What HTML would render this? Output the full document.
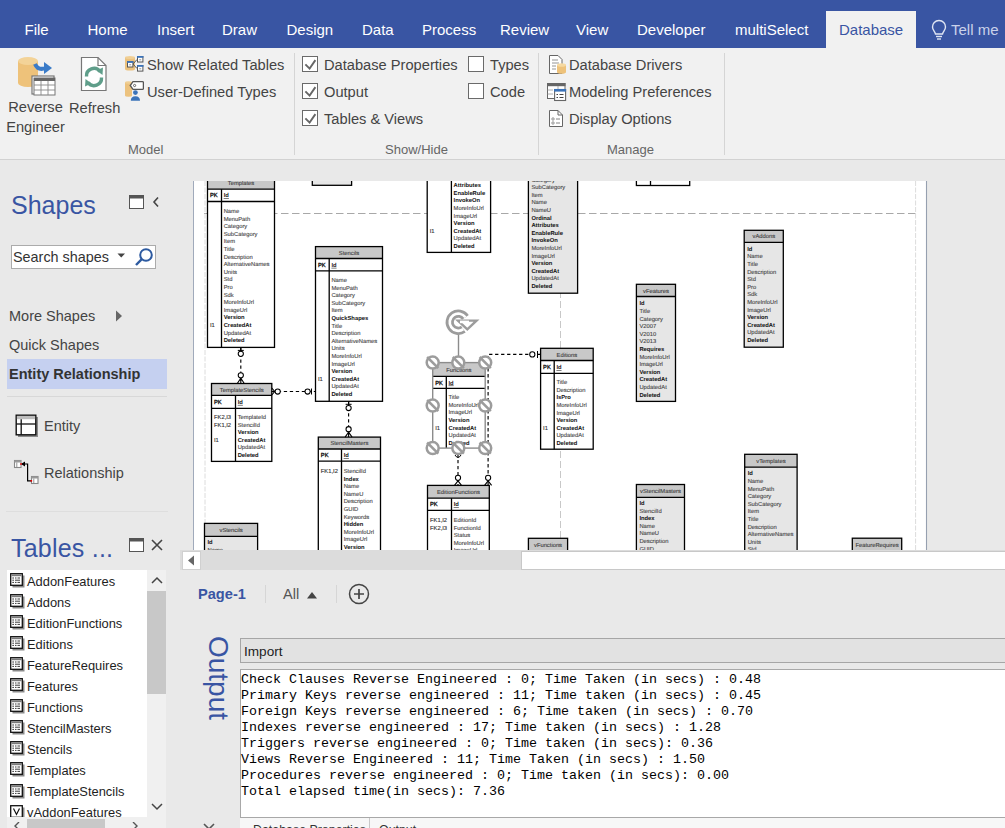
<!DOCTYPE html><html><head><meta charset="utf-8"><style>
*{margin:0;padding:0;box-sizing:border-box}
html,body{width:1005px;height:828px;overflow:hidden;background:#e9e9e9;font-family:"Liberation Sans",sans-serif;position:relative}
.a{position:absolute;white-space:nowrap}
.tab{position:absolute;top:21px;font-size:15px;color:#fff;line-height:18px}
.rb{font-size:14.67px;color:#444;line-height:16px}
.grp{font-size:13px;color:#666;line-height:14px}
.cb{position:absolute;width:16px;height:16px;border:1px solid #6a6a6a;background:#fff}
.li{position:absolute;left:27px;font-size:12.9px;color:#1e1e1e;line-height:14px}
.lico{position:absolute;left:10px;width:15px;height:15px}
.mono{position:absolute;left:241px;font-family:"Liberation Mono",monospace;font-size:13.33px;color:#000;line-height:16px}
</style></head><body>
<div class="a" style="left:0;top:0;width:1005px;height:48px;background:#3955a3"></div>
<div class="a" style="left:826px;top:11px;width:90px;height:37px;background:#f1f1f1"></div>
<div class="tab" style="left:24.5px">File</div>
<div class="tab" style="left:87.5px">Home</div>
<div class="tab" style="left:157px">Insert</div>
<div class="tab" style="left:222px">Draw</div>
<div class="tab" style="left:286.5px">Design</div>
<div class="tab" style="left:362px">Data</div>
<div class="tab" style="left:422px">Process</div>
<div class="tab" style="left:500px">Review</div>
<div class="tab" style="left:576px">View</div>
<div class="tab" style="left:637px">Developer</div>
<div class="tab" style="left:735px">multiSelect</div>
<div class="tab" style="left:839px;color:#3955a3">Database</div>
<div class="tab" style="left:951px;color:#c9d2ea">Tell me</div>
<svg class="a" style="left:930px;top:19px" width="18" height="22" viewBox="0 0 18 22"><path d="M9,1.5 C5,1.5 2.5,4.5 2.5,8 C2.5,11 5,12.5 5.5,15 L12.5,15 C13,12.5 15.5,11 15.5,8 C15.5,4.5 13,1.5 9,1.5 Z" fill="none" stroke="#dfe5f3" stroke-width="1.4"/><line x1="6" y1="17.5" x2="12" y2="17.5" stroke="#dfe5f3" stroke-width="1.4"/><line x1="7" y1="20" x2="11" y2="20" stroke="#dfe5f3" stroke-width="1.4"/></svg>
<div class="a" style="left:0;top:48px;width:1005px;height:111px;background:#f1f1f1"></div>
<div class="a" style="left:0;top:159px;width:1005px;height:1px;background:#d2d2d2"></div>
<div class="a" style="left:294px;top:53px;width:1px;height:102px;background:#d5d5d5"></div>
<div class="a" style="left:538px;top:53px;width:1px;height:102px;background:#d5d5d5"></div>
<div class="a" style="left:724px;top:53px;width:1px;height:102px;background:#d5d5d5"></div>
<svg class="a" style="left:14px;top:55px" width="44" height="42" viewBox="0 0 44 42"><path d="M4,6 L4,28 A10,4 0 0 0 24,28 L24,6 Z" fill="#eec27a"/><ellipse cx="14" cy="6" rx="10" ry="4" fill="#f3d398"/><path d="M21,9 Q24,16 32,13" fill="none" stroke="#3a7bc8" stroke-width="4"/><path d="M30,7 L38,13 L30,19 Z" fill="#3a7bc8"/><rect x="18" y="21" width="22" height="18" fill="#fff" stroke="#777" stroke-width="1.2"/><rect x="20" y="23" width="21" height="17" fill="#fff" stroke="#777" stroke-width="1"/><rect x="20" y="23" width="21" height="3" fill="#666"/><path d="M20,30 H41 M20,35 H41 M27,26 V40 M34,26 V40" stroke="#888" stroke-width="0.9"/></svg>
<div class="a rb" style="left:0px;top:97px;width:71px;text-align:center;line-height:20px">Reverse<br>Engineer</div>
<svg class="a" style="left:80px;top:56px" width="28" height="36" viewBox="0 0 28 36"><path d="M1.5,1.5 H18 L26,9.5 V34.5 H1.5 Z" fill="#fff" stroke="#777" stroke-width="1.2"/><path d="M18,1.5 V9.5 H26" fill="none" stroke="#777" stroke-width="1.2"/><path d="M6.5,20.5 A7.5,7.5 0 0 1 20,15.5" fill="none" stroke="#5f9e8a" stroke-width="3.4"/><path d="M16.5,14.5 L23,11.5 L22.5,19 Z" fill="#5f9e8a"/><path d="M21.5,21.5 A7.5,7.5 0 0 1 8,26.5" fill="none" stroke="#5f9e8a" stroke-width="3.4"/><path d="M11.5,27.5 L5,30.5 L5.5,23 Z" fill="#5f9e8a"/></svg>
<div class="a rb" style="left:69px;top:98px;line-height:20px">Refresh</div>
<svg class="a" style="left:124px;top:55px" width="20" height="18" viewBox="0 0 20 18"><path d="M1,2.5 V14 A5,1.5 0 0 0 11,14 V2.5 Z" fill="#ecc27e"/><ellipse cx="6" cy="2.5" rx="5" ry="1.5" fill="#f0cf95"/><path d="M9,9 L13,4.5 M9,9 L13,13.5" stroke="#555" stroke-width="1"/><rect x="3.5" y="6.6" width="5.4" height="5.4" fill="#fff" stroke="#555" stroke-width="1"/><rect x="3" y="6.1" width="6.4" height="1.8" fill="#3a72b8"/><path d="M5.2,9.8 H7.2" stroke="#777" stroke-width="0.8"/><rect x="13.5" y="1.5" width="5.4" height="5.5" fill="#fff" stroke="#555" stroke-width="1"/><rect x="13" y="1" width="6.4" height="1.8" fill="#3a72b8"/><path d="M15.2,4.8 H17.2" stroke="#777" stroke-width="0.8"/><rect x="13.5" y="10.5" width="5.4" height="5.6" fill="#fff" stroke="#555" stroke-width="1"/><rect x="13" y="10" width="6.4" height="1.8" fill="#3a72b8"/><path d="M15.2,13.8 H17.2" stroke="#777" stroke-width="0.8"/></svg>
<svg class="a" style="left:124px;top:80px" width="20" height="22" viewBox="0 0 20 22"><path d="M1,2.5 V15.5 A3.5,1.2 0 0 0 8,15.5 V2.5 Z" fill="#ecc27e"/><ellipse cx="4.5" cy="2.5" rx="3.5" ry="1.2" fill="#f0cf95"/><path d="M9,1.6 H18.4 Q19.4,1.6 19.4,2.6 V8.4 Q19.4,9.4 18.4,9.4 H9 L6.2,5.5 Z" fill="#fff" stroke="#555" stroke-width="1.3"/><circle cx="10.6" cy="5.5" r="1.1" fill="none" stroke="#555" stroke-width="0.9"/><circle cx="11.4" cy="12.6" r="2.4" fill="#3b73b9"/><path d="M6.8,20.8 Q6.8,16.2 11.4,16.2 Q16,16.2 16,20.8 Z" fill="#3b73b9"/></svg>
<div class="a rb" style="left:147px;top:57px">Show Related Tables</div>
<div class="a rb" style="left:147px;top:84px">User-Defined Types</div>
<div class="a grp" style="left:128px;top:143px">Model</div>
<div class="cb" style="left:302px;top:56px"><svg width="16" height="16" viewBox="0 0 16 16" style="position:absolute;left:-1px;top:-1px"><path d="M3.4,8.3 L7.6,12.6 L13.4,4.1" fill="none" stroke="#666" stroke-width="1.9"/></svg></div>
<div class="a rb" style="left:324px;top:57px">Database Properties</div>
<div class="cb" style="left:302px;top:83px"><svg width="16" height="16" viewBox="0 0 16 16" style="position:absolute;left:-1px;top:-1px"><path d="M3.4,8.3 L7.6,12.6 L13.4,4.1" fill="none" stroke="#666" stroke-width="1.9"/></svg></div>
<div class="a rb" style="left:324px;top:84px">Output</div>
<div class="cb" style="left:302px;top:110px"><svg width="16" height="16" viewBox="0 0 16 16" style="position:absolute;left:-1px;top:-1px"><path d="M3.4,8.3 L7.6,12.6 L13.4,4.1" fill="none" stroke="#666" stroke-width="1.9"/></svg></div>
<div class="a rb" style="left:324px;top:111px">Tables &amp; Views</div>
<div class="cb" style="left:468px;top:56px"></div>
<div class="a rb" style="left:490px;top:57px">Types</div>
<div class="cb" style="left:468px;top:83px"></div>
<div class="a rb" style="left:490px;top:84px">Code</div>
<div class="a grp" style="left:385px;top:143px">Show/Hide</div>
<svg class="a" style="left:548px;top:54px" width="20" height="21" viewBox="0 0 20 21"><path d="M1.5,1.5 H10 L14,5.5 V19.5 H1.5 Z" fill="#fff" stroke="#666" stroke-width="1"/><path d="M4,6 H10 M4,9 H11 M4,12 H8 M4,15 H8" stroke="#888" stroke-width="0.9"/><path d="M9,11 V18 A4.5,1.8 0 0 0 18,18 V11 Z" fill="#eec27a"/><ellipse cx="13.5" cy="11" rx="4.5" ry="1.8" fill="#f6d9a0"/></svg>
<svg class="a" style="left:546px;top:82px" width="21" height="20" viewBox="0 0 21 20"><rect x="1.5" y="1.5" width="17.5" height="15" fill="#fff" stroke="#666" stroke-width="1"/><rect x="1" y="1" width="18.5" height="3.2" fill="#666"/><path d="M1.5,8 H7 M1.5,12 H7 M12,4 V8" stroke="#999" stroke-width="0.8"/><rect x="8.6" y="7.5" width="11" height="11" fill="#fff" stroke="#666" stroke-width="1.1"/><rect x="8.1" y="7" width="12" height="2.6" fill="#3a72b8"/><path d="M10.5,12.5 H12 M13.5,12.5 H17.5 M10.5,15.5 H12 M13.5,15.5 H17.5" stroke="#444" stroke-width="1.1"/></svg>
<svg class="a" style="left:548px;top:109px" width="16" height="19" viewBox="0 0 16 19"><path d="M1.5,1.5 H10 L14.5,6 V17.5 H1.5 Z" fill="#fff" stroke="#666" stroke-width="1"/><path d="M10,1.5 V6 H14.5" fill="none" stroke="#666" stroke-width="1"/><circle cx="5" cy="10" r="1.2" fill="none" stroke="#777" stroke-width="0.8"/><circle cx="5" cy="14" r="1.2" fill="none" stroke="#777" stroke-width="0.8"/><path d="M8,10 H12 M8,14 H12" stroke="#777" stroke-width="0.9"/></svg>
<div class="a rb" style="left:569px;top:57px">Database Drivers</div>
<div class="a rb" style="left:569px;top:84px">Modeling Preferences</div>
<div class="a rb" style="left:569px;top:111px">Display Options</div>
<div class="a grp" style="left:607px;top:143px">Manage</div>
<svg text-rendering="geometricPrecision" width="825" height="390" viewBox="180 160 825 390" style="position:absolute;left:180px;top:160px;font-family:'Liberation Sans',sans-serif">
<rect x="180" y="160" width="825" height="390" fill="#e9e9e9"/>
<rect x="194" y="181" width="733" height="369" fill="#ffffff"/>
<defs><clipPath id="pg"><rect x="194" y="181" width="733" height="369"/></clipPath></defs><g clip-path="url(#pg)">
<line x1="204" y1="213.5" x2="916" y2="213.5" stroke="#a8a8a8" stroke-width="1" stroke-dasharray="7.5 3.5"/>
<line x1="205" y1="181" x2="205" y2="550" stroke="#dcdcdc" stroke-width="1" stroke-dasharray="5 1.5"/>
<line x1="915.6" y1="181" x2="915.6" y2="550" stroke="#dcdcdc" stroke-width="1" stroke-dasharray="5 1.5"/>
<line x1="560.5" y1="181" x2="560.5" y2="550" stroke="#c8c8c8" stroke-width="1" stroke-dasharray="7 3"/>
<rect x="312.3" y="150" width="39.30000000000001" height="35.30000000000001" fill="#e6e6e6"/>
<rect x="312.3" y="150" width="39.30000000000001" height="10" fill="#c8c8c8"/>
<text x="332.0" y="157.1" font-size="5.8" font-weight="normal" fill="#404040" stroke="#404040" stroke-width="0.12" text-anchor="middle">x</text>
<g stroke="#000" stroke-width="1.3" fill="none">
<rect x="312.3" y="150" width="39.30000000000001" height="35.30000000000001"/>
<line x1="312.3" y1="160" x2="351.6" y2="160"/>
</g>
<rect x="636.4" y="150" width="53.30000000000007" height="35.5" fill="#fff" stroke="none"/>
<rect x="636.4" y="150" width="53.30000000000007" height="10" fill="#c8c8c8"/>
<text x="663.0" y="157.1" font-size="5.8" font-weight="normal" fill="#404040" stroke="#404040" stroke-width="0.12" text-anchor="middle">y</text>
<text x="638.9" y="167.1" font-size="5.8" font-weight="normal" fill="#111" stroke="#111" stroke-width="0.3">PK</text>
<text x="652.7" y="167.1" font-size="5.8" font-weight="bold" fill="#202020" text-decoration="underline">Id</text>
<g stroke="#000" stroke-width="1.3" fill="none">
<rect x="636.4" y="150" width="53.30000000000007" height="35.5"/>
<line x1="636.4" y1="160" x2="689.7" y2="160"/>
<line x1="636.4" y1="170" x2="689.7" y2="170"/>
<line x1="650.5" y1="160" x2="650.5" y2="185.5"/>
</g>
<rect x="427.2" y="100" width="63.400000000000034" height="152.4" fill="#fff" stroke="none"/>
<rect x="427.2" y="100" width="63.400000000000034" height="10" fill="#c8c8c8"/>
<text x="458.9" y="107.1" font-size="5.8" font-weight="normal" fill="#404040" stroke="#404040" stroke-width="0.12" text-anchor="middle">Functions0</text>
<text x="429.7" y="118.1" font-size="5.8" font-weight="normal" fill="#111" stroke="#111" stroke-width="0.3">PK</text>
<text x="453.6" y="118.1" font-size="5.8" font-weight="bold" fill="#202020" text-decoration="underline">Id</text>
<text x="453.6" y="179.6" font-size="5.8" font-weight="bold" fill="#111" text-anchor="start">Ordinal</text>
<text x="453.6" y="187.2" font-size="5.8" font-weight="bold" fill="#111" text-anchor="start">Attributes</text>
<text x="453.6" y="194.8" font-size="5.8" font-weight="bold" fill="#111" text-anchor="start">EnableRule</text>
<text x="453.6" y="202.4" font-size="5.8" font-weight="bold" fill="#111" text-anchor="start">InvokeOn</text>
<text x="453.6" y="210.0" font-size="5.8" font-weight="normal" fill="#484848" stroke="#484848" stroke-width="0.12" text-anchor="start">MoreInfoUrl</text>
<text x="453.6" y="217.6" font-size="5.8" font-weight="normal" fill="#484848" stroke="#484848" stroke-width="0.12" text-anchor="start">ImageUrl</text>
<text x="453.6" y="225.2" font-size="5.8" font-weight="bold" fill="#111" text-anchor="start">Version</text>
<text x="453.6" y="232.8" font-size="5.8" font-weight="bold" fill="#111" text-anchor="start">CreatedAt</text>
<text x="429.7" y="232.8" font-size="5.8" font-weight="normal" fill="#303030" stroke="#303030" stroke-width="0.12" text-anchor="start">I1</text>
<text x="453.6" y="240.4" font-size="5.8" font-weight="normal" fill="#484848" stroke="#484848" stroke-width="0.12" text-anchor="start">UpdatedAt</text>
<text x="453.6" y="248.0" font-size="5.8" font-weight="bold" fill="#111" text-anchor="start">Deleted</text>
<g stroke="#000" stroke-width="1.3" fill="none">
<rect x="427.2" y="100" width="63.400000000000034" height="152.4"/>
<line x1="427.2" y1="110" x2="490.6" y2="110"/>
<line x1="427.2" y1="122" x2="490.6" y2="122"/>
<line x1="451.4" y1="110" x2="451.4" y2="252.4"/>
</g>
<rect x="528.4" y="100" width="49.200000000000045" height="193.2" fill="#e6e6e6"/>
<rect x="528.4" y="100" width="49.200000000000045" height="10" fill="#c8c8c8"/>
<text x="553.0" y="107.1" font-size="5.8" font-weight="normal" fill="#404040" stroke="#404040" stroke-width="0.12" text-anchor="middle">vx</text>
<text x="531.4" y="181.6" font-size="5.8" font-weight="normal" fill="#484848" stroke="#484848" stroke-width="0.12" text-anchor="start">Category</text>
<text x="531.4" y="189.2" font-size="5.8" font-weight="normal" fill="#484848" stroke="#484848" stroke-width="0.12" text-anchor="start">SubCategory</text>
<text x="531.4" y="196.8" font-size="5.8" font-weight="normal" fill="#484848" stroke="#484848" stroke-width="0.12" text-anchor="start">Item</text>
<text x="531.4" y="204.4" font-size="5.8" font-weight="normal" fill="#484848" stroke="#484848" stroke-width="0.12" text-anchor="start">Name</text>
<text x="531.4" y="212.0" font-size="5.8" font-weight="normal" fill="#484848" stroke="#484848" stroke-width="0.12" text-anchor="start">NameU</text>
<text x="531.4" y="219.6" font-size="5.8" font-weight="bold" fill="#111" text-anchor="start">Ordinal</text>
<text x="531.4" y="227.2" font-size="5.8" font-weight="bold" fill="#111" text-anchor="start">Attributes</text>
<text x="531.4" y="234.8" font-size="5.8" font-weight="bold" fill="#111" text-anchor="start">EnableRule</text>
<text x="531.4" y="242.4" font-size="5.8" font-weight="bold" fill="#111" text-anchor="start">InvokeOn</text>
<text x="531.4" y="250.0" font-size="5.8" font-weight="normal" fill="#484848" stroke="#484848" stroke-width="0.12" text-anchor="start">MoreInfoUrl</text>
<text x="531.4" y="257.6" font-size="5.8" font-weight="normal" fill="#484848" stroke="#484848" stroke-width="0.12" text-anchor="start">ImageUrl</text>
<text x="531.4" y="265.2" font-size="5.8" font-weight="bold" fill="#111" text-anchor="start">Version</text>
<text x="531.4" y="272.8" font-size="5.8" font-weight="bold" fill="#111" text-anchor="start">CreatedAt</text>
<text x="531.4" y="280.4" font-size="5.8" font-weight="normal" fill="#484848" stroke="#484848" stroke-width="0.12" text-anchor="start">UpdatedAt</text>
<text x="531.4" y="288.0" font-size="5.8" font-weight="bold" fill="#111" text-anchor="start">Deleted</text>
<g stroke="#000" stroke-width="1.3" fill="none">
<rect x="528.4" y="100" width="49.200000000000045" height="193.2"/>
<line x1="528.4" y1="110" x2="577.6" y2="110"/>
</g>
<rect x="207.5" y="177" width="67.0" height="170.39999999999998" fill="#fff" stroke="none"/>
<rect x="207.5" y="177" width="67.0" height="12.199999999999989" fill="#c8c8c8"/>
<text x="241.0" y="185.2" font-size="5.8" font-weight="normal" fill="#404040" stroke="#404040" stroke-width="0.12" text-anchor="middle">Templates</text>
<text x="210.0" y="197.4" font-size="5.8" font-weight="normal" fill="#111" stroke="#111" stroke-width="0.3">PK</text>
<text x="223.7" y="197.4" font-size="5.8" font-weight="bold" fill="#202020" text-decoration="underline">Id</text>
<text x="223.7" y="212.9" font-size="5.8" font-weight="normal" fill="#484848" stroke="#484848" stroke-width="0.12" text-anchor="start">Name</text>
<text x="223.7" y="220.5" font-size="5.8" font-weight="normal" fill="#484848" stroke="#484848" stroke-width="0.12" text-anchor="start">MenuPath</text>
<text x="223.7" y="228.1" font-size="5.8" font-weight="normal" fill="#484848" stroke="#484848" stroke-width="0.12" text-anchor="start">Category</text>
<text x="223.7" y="235.7" font-size="5.8" font-weight="normal" fill="#484848" stroke="#484848" stroke-width="0.12" text-anchor="start">SubCategory</text>
<text x="223.7" y="243.3" font-size="5.8" font-weight="normal" fill="#484848" stroke="#484848" stroke-width="0.12" text-anchor="start">Item</text>
<text x="223.7" y="250.9" font-size="5.8" font-weight="normal" fill="#484848" stroke="#484848" stroke-width="0.12" text-anchor="start">Title</text>
<text x="223.7" y="258.5" font-size="5.8" font-weight="normal" fill="#484848" stroke="#484848" stroke-width="0.12" text-anchor="start">Description</text>
<text x="223.7" y="266.1" font-size="5.8" font-weight="normal" fill="#484848" stroke="#484848" stroke-width="0.12" text-anchor="start">AlternativeNames</text>
<text x="223.7" y="273.7" font-size="5.8" font-weight="normal" fill="#484848" stroke="#484848" stroke-width="0.12" text-anchor="start">Units</text>
<text x="223.7" y="281.3" font-size="5.8" font-weight="normal" fill="#484848" stroke="#484848" stroke-width="0.12" text-anchor="start">Std</text>
<text x="223.7" y="288.9" font-size="5.8" font-weight="normal" fill="#484848" stroke="#484848" stroke-width="0.12" text-anchor="start">Pro</text>
<text x="223.7" y="296.5" font-size="5.8" font-weight="normal" fill="#484848" stroke="#484848" stroke-width="0.12" text-anchor="start">Sdk</text>
<text x="223.7" y="304.1" font-size="5.8" font-weight="normal" fill="#484848" stroke="#484848" stroke-width="0.12" text-anchor="start">MoreInfoUrl</text>
<text x="223.7" y="311.7" font-size="5.8" font-weight="normal" fill="#484848" stroke="#484848" stroke-width="0.12" text-anchor="start">ImageUrl</text>
<text x="223.7" y="319.3" font-size="5.8" font-weight="bold" fill="#111" text-anchor="start">Version</text>
<text x="223.7" y="326.9" font-size="5.8" font-weight="bold" fill="#111" text-anchor="start">CreatedAt</text>
<text x="210.0" y="326.9" font-size="5.8" font-weight="normal" fill="#303030" stroke="#303030" stroke-width="0.12" text-anchor="start">I1</text>
<text x="223.7" y="334.5" font-size="5.8" font-weight="normal" fill="#484848" stroke="#484848" stroke-width="0.12" text-anchor="start">UpdatedAt</text>
<text x="223.7" y="342.1" font-size="5.8" font-weight="bold" fill="#111" text-anchor="start">Deleted</text>
<g stroke="#000" stroke-width="1.3" fill="none">
<rect x="207.5" y="177" width="67.0" height="170.39999999999998"/>
<line x1="207.5" y1="189.2" x2="274.5" y2="189.2"/>
<line x1="207.5" y1="201.5" x2="274.5" y2="201.5"/>
<line x1="221.5" y1="189.2" x2="221.5" y2="347.4"/>
</g>
<rect x="315.5" y="246.6" width="67.0" height="154.70000000000002" fill="#fff" stroke="none"/>
<rect x="315.5" y="246.6" width="67.0" height="11.900000000000006" fill="#c8c8c8"/>
<text x="349.0" y="254.7" font-size="5.8" font-weight="normal" fill="#404040" stroke="#404040" stroke-width="0.12" text-anchor="middle">Stencils</text>
<text x="318.0" y="266.8" font-size="5.8" font-weight="normal" fill="#111" stroke="#111" stroke-width="0.3">PK</text>
<text x="331.4" y="266.8" font-size="5.8" font-weight="bold" fill="#202020" text-decoration="underline">Id</text>
<text x="331.4" y="282.0" font-size="5.8" font-weight="normal" fill="#484848" stroke="#484848" stroke-width="0.12" text-anchor="start">Name</text>
<text x="331.4" y="289.6" font-size="5.8" font-weight="normal" fill="#484848" stroke="#484848" stroke-width="0.12" text-anchor="start">MenuPath</text>
<text x="331.4" y="297.2" font-size="5.8" font-weight="normal" fill="#484848" stroke="#484848" stroke-width="0.12" text-anchor="start">Category</text>
<text x="331.4" y="304.8" font-size="5.8" font-weight="normal" fill="#484848" stroke="#484848" stroke-width="0.12" text-anchor="start">SubCategory</text>
<text x="331.4" y="312.4" font-size="5.8" font-weight="normal" fill="#484848" stroke="#484848" stroke-width="0.12" text-anchor="start">Item</text>
<text x="331.4" y="320.0" font-size="5.8" font-weight="bold" fill="#111" text-anchor="start">QuickShapes</text>
<text x="331.4" y="327.6" font-size="5.8" font-weight="normal" fill="#484848" stroke="#484848" stroke-width="0.12" text-anchor="start">Title</text>
<text x="331.4" y="335.2" font-size="5.8" font-weight="normal" fill="#484848" stroke="#484848" stroke-width="0.12" text-anchor="start">Description</text>
<text x="331.4" y="342.8" font-size="5.8" font-weight="normal" fill="#484848" stroke="#484848" stroke-width="0.12" text-anchor="start">AlternativeNames</text>
<text x="331.4" y="350.4" font-size="5.8" font-weight="normal" fill="#484848" stroke="#484848" stroke-width="0.12" text-anchor="start">Units</text>
<text x="331.4" y="358.0" font-size="5.8" font-weight="normal" fill="#484848" stroke="#484848" stroke-width="0.12" text-anchor="start">MoreInfoUrl</text>
<text x="331.4" y="365.6" font-size="5.8" font-weight="normal" fill="#484848" stroke="#484848" stroke-width="0.12" text-anchor="start">ImageUrl</text>
<text x="331.4" y="373.2" font-size="5.8" font-weight="bold" fill="#111" text-anchor="start">Version</text>
<text x="331.4" y="380.8" font-size="5.8" font-weight="bold" fill="#111" text-anchor="start">CreatedAt</text>
<text x="318.0" y="380.8" font-size="5.8" font-weight="normal" fill="#303030" stroke="#303030" stroke-width="0.12" text-anchor="start">I1</text>
<text x="331.4" y="388.4" font-size="5.8" font-weight="normal" fill="#484848" stroke="#484848" stroke-width="0.12" text-anchor="start">UpdatedAt</text>
<text x="331.4" y="396.0" font-size="5.8" font-weight="bold" fill="#111" text-anchor="start">Deleted</text>
<g stroke="#000" stroke-width="1.3" fill="none">
<rect x="315.5" y="246.6" width="67.0" height="154.70000000000002"/>
<line x1="315.5" y1="258.5" x2="382.5" y2="258.5"/>
<line x1="315.5" y1="270.8" x2="382.5" y2="270.8"/>
<line x1="329.2" y1="258.5" x2="329.2" y2="401.3"/>
</g>
<rect x="211.5" y="383.5" width="60.30000000000001" height="77.89999999999998" fill="#fff" stroke="none"/>
<rect x="211.5" y="383.5" width="60.30000000000001" height="11.800000000000011" fill="#c8c8c8"/>
<text x="241.7" y="391.5" font-size="5.8" font-weight="normal" fill="#404040" stroke="#404040" stroke-width="0.12" text-anchor="middle">TemplateStencils</text>
<text x="214.0" y="403.9" font-size="5.8" font-weight="normal" fill="#111" stroke="#111" stroke-width="0.3">PK</text>
<text x="237.7" y="403.9" font-size="5.8" font-weight="bold" fill="#202020" text-decoration="underline">Id</text>
<text x="237.7" y="419.0" font-size="5.8" font-weight="normal" fill="#484848" stroke="#484848" stroke-width="0.12" text-anchor="start">TemplateId</text>
<text x="214.0" y="419.0" font-size="5.8" font-weight="normal" fill="#303030" stroke="#303030" stroke-width="0.12" text-anchor="start">FK2,I3</text>
<text x="237.7" y="426.6" font-size="5.8" font-weight="normal" fill="#484848" stroke="#484848" stroke-width="0.12" text-anchor="start">StencilId</text>
<text x="214.0" y="426.6" font-size="5.8" font-weight="normal" fill="#303030" stroke="#303030" stroke-width="0.12" text-anchor="start">FK1,I2</text>
<text x="237.7" y="434.2" font-size="5.8" font-weight="bold" fill="#111" text-anchor="start">Version</text>
<text x="237.7" y="441.8" font-size="5.8" font-weight="bold" fill="#111" text-anchor="start">CreatedAt</text>
<text x="214.0" y="441.8" font-size="5.8" font-weight="normal" fill="#303030" stroke="#303030" stroke-width="0.12" text-anchor="start">I1</text>
<text x="237.7" y="449.4" font-size="5.8" font-weight="normal" fill="#484848" stroke="#484848" stroke-width="0.12" text-anchor="start">UpdatedAt</text>
<text x="237.7" y="457.0" font-size="5.8" font-weight="bold" fill="#111" text-anchor="start">Deleted</text>
<g stroke="#000" stroke-width="1.3" fill="none">
<rect x="211.5" y="383.5" width="60.30000000000001" height="77.89999999999998"/>
<line x1="211.5" y1="395.3" x2="271.8" y2="395.3"/>
<line x1="211.5" y1="408.3" x2="271.8" y2="408.3"/>
<line x1="235.5" y1="395.3" x2="235.5" y2="461.4"/>
</g>
<rect x="318.3" y="437.1" width="62.19999999999999" height="162.89999999999998" fill="#fff" stroke="none"/>
<rect x="318.3" y="437.1" width="62.19999999999999" height="11.899999999999977" fill="#c8c8c8"/>
<text x="349.4" y="445.2" font-size="5.8" font-weight="normal" fill="#404040" stroke="#404040" stroke-width="0.12" text-anchor="middle">StencilMasters</text>
<text x="320.8" y="457.2" font-size="5.8" font-weight="normal" fill="#111" stroke="#111" stroke-width="0.3">PK</text>
<text x="343.7" y="457.2" font-size="5.8" font-weight="bold" fill="#202020" text-decoration="underline">Id</text>
<text x="343.7" y="472.9" font-size="5.8" font-weight="normal" fill="#484848" stroke="#484848" stroke-width="0.12" text-anchor="start">StencilId</text>
<text x="320.8" y="472.9" font-size="5.8" font-weight="normal" fill="#303030" stroke="#303030" stroke-width="0.12" text-anchor="start">FK1,I2</text>
<text x="343.7" y="480.5" font-size="5.8" font-weight="bold" fill="#111" text-anchor="start">Index</text>
<text x="343.7" y="488.1" font-size="5.8" font-weight="normal" fill="#484848" stroke="#484848" stroke-width="0.12" text-anchor="start">Name</text>
<text x="343.7" y="495.7" font-size="5.8" font-weight="normal" fill="#484848" stroke="#484848" stroke-width="0.12" text-anchor="start">NameU</text>
<text x="343.7" y="503.3" font-size="5.8" font-weight="normal" fill="#484848" stroke="#484848" stroke-width="0.12" text-anchor="start">Description</text>
<text x="343.7" y="510.9" font-size="5.8" font-weight="normal" fill="#484848" stroke="#484848" stroke-width="0.12" text-anchor="start">GUID</text>
<text x="343.7" y="518.5" font-size="5.8" font-weight="normal" fill="#484848" stroke="#484848" stroke-width="0.12" text-anchor="start">Keywords</text>
<text x="343.7" y="526.1" font-size="5.8" font-weight="bold" fill="#111" text-anchor="start">Hidden</text>
<text x="343.7" y="533.7" font-size="5.8" font-weight="normal" fill="#484848" stroke="#484848" stroke-width="0.12" text-anchor="start">MoreInfoUrl</text>
<text x="343.7" y="541.3" font-size="5.8" font-weight="normal" fill="#484848" stroke="#484848" stroke-width="0.12" text-anchor="start">ImageUrl</text>
<text x="343.7" y="548.9" font-size="5.8" font-weight="bold" fill="#111" text-anchor="start">Version</text>
<text x="343.7" y="556.5" font-size="5.8" font-weight="bold" fill="#111" text-anchor="start">CreatedAt</text>
<g stroke="#000" stroke-width="1.3" fill="none">
<rect x="318.3" y="437.1" width="62.19999999999999" height="162.89999999999998"/>
<line x1="318.3" y1="449.0" x2="380.5" y2="449.0"/>
<line x1="318.3" y1="461.2" x2="380.5" y2="461.2"/>
<line x1="341.5" y1="449.0" x2="341.5" y2="600"/>
</g>
<rect x="540.6" y="348.3" width="52.60000000000002" height="100.89999999999998" fill="#fff" stroke="none"/>
<rect x="540.6" y="348.3" width="52.60000000000002" height="12.199999999999989" fill="#c8c8c8"/>
<text x="566.9" y="356.5" font-size="5.8" font-weight="normal" fill="#404040" stroke="#404040" stroke-width="0.12" text-anchor="middle">Editions</text>
<text x="543.1" y="369.1" font-size="5.8" font-weight="normal" fill="#111" stroke="#111" stroke-width="0.3">PK</text>
<text x="556.4" y="369.1" font-size="5.8" font-weight="bold" fill="#202020" text-decoration="underline">Id</text>
<text x="556.4" y="384.1" font-size="5.8" font-weight="normal" fill="#484848" stroke="#484848" stroke-width="0.12" text-anchor="start">Title</text>
<text x="556.4" y="391.7" font-size="5.8" font-weight="normal" fill="#484848" stroke="#484848" stroke-width="0.12" text-anchor="start">Description</text>
<text x="556.4" y="399.3" font-size="5.8" font-weight="bold" fill="#111" text-anchor="start">IsPro</text>
<text x="556.4" y="406.9" font-size="5.8" font-weight="normal" fill="#484848" stroke="#484848" stroke-width="0.12" text-anchor="start">MoreInfoUrl</text>
<text x="556.4" y="414.5" font-size="5.8" font-weight="normal" fill="#484848" stroke="#484848" stroke-width="0.12" text-anchor="start">ImageUrl</text>
<text x="556.4" y="422.1" font-size="5.8" font-weight="bold" fill="#111" text-anchor="start">Version</text>
<text x="556.4" y="429.7" font-size="5.8" font-weight="bold" fill="#111" text-anchor="start">CreatedAt</text>
<text x="543.1" y="429.7" font-size="5.8" font-weight="normal" fill="#303030" stroke="#303030" stroke-width="0.12" text-anchor="start">I1</text>
<text x="556.4" y="437.3" font-size="5.8" font-weight="normal" fill="#484848" stroke="#484848" stroke-width="0.12" text-anchor="start">UpdatedAt</text>
<text x="556.4" y="444.9" font-size="5.8" font-weight="bold" fill="#111" text-anchor="start">Deleted</text>
<g stroke="#000" stroke-width="1.3" fill="none">
<rect x="540.6" y="348.3" width="52.60000000000002" height="100.89999999999998"/>
<line x1="540.6" y1="360.5" x2="593.2" y2="360.5"/>
<line x1="540.6" y1="373.4" x2="593.2" y2="373.4"/>
<line x1="554.2" y1="360.5" x2="554.2" y2="449.2"/>
</g>
<rect x="427.5" y="485.4" width="61.80000000000001" height="114.60000000000002" fill="#fff" stroke="none"/>
<rect x="427.5" y="485.4" width="61.80000000000001" height="12.800000000000011" fill="#c8c8c8"/>
<text x="458.4" y="493.9" font-size="5.8" font-weight="normal" fill="#404040" stroke="#404040" stroke-width="0.12" text-anchor="middle">EditionFunctions</text>
<text x="430.0" y="506.4" font-size="5.8" font-weight="normal" fill="#111" stroke="#111" stroke-width="0.3">PK</text>
<text x="453.7" y="506.4" font-size="5.8" font-weight="bold" fill="#202020" text-decoration="underline">Id</text>
<text x="453.7" y="522.0" font-size="5.8" font-weight="normal" fill="#484848" stroke="#484848" stroke-width="0.12" text-anchor="start">EditionId</text>
<text x="430.0" y="522.0" font-size="5.8" font-weight="normal" fill="#303030" stroke="#303030" stroke-width="0.12" text-anchor="start">FK1,I2</text>
<text x="453.7" y="529.6" font-size="5.8" font-weight="normal" fill="#484848" stroke="#484848" stroke-width="0.12" text-anchor="start">FunctionId</text>
<text x="430.0" y="529.6" font-size="5.8" font-weight="normal" fill="#303030" stroke="#303030" stroke-width="0.12" text-anchor="start">FK2,I3</text>
<text x="453.7" y="537.2" font-size="5.8" font-weight="normal" fill="#484848" stroke="#484848" stroke-width="0.12" text-anchor="start">Status</text>
<text x="453.7" y="544.8" font-size="5.8" font-weight="normal" fill="#484848" stroke="#484848" stroke-width="0.12" text-anchor="start">MoreInfoUrl</text>
<text x="453.7" y="552.4" font-size="5.8" font-weight="normal" fill="#484848" stroke="#484848" stroke-width="0.12" text-anchor="start">ImageUrl</text>
<text x="453.7" y="560.0" font-size="5.8" font-weight="bold" fill="#111" text-anchor="start">Version</text>
<g stroke="#000" stroke-width="1.3" fill="none">
<rect x="427.5" y="485.4" width="61.80000000000001" height="114.60000000000002"/>
<line x1="427.5" y1="498.2" x2="489.3" y2="498.2"/>
<line x1="427.5" y1="510.3" x2="489.3" y2="510.3"/>
<line x1="451.5" y1="498.2" x2="451.5" y2="600"/>
</g>
<rect x="636.4" y="284.3" width="39.10000000000002" height="117.09999999999997" fill="#e6e6e6"/>
<rect x="636.4" y="284.3" width="39.10000000000002" height="12.199999999999989" fill="#c8c8c8"/>
<text x="656.0" y="292.5" font-size="5.8" font-weight="normal" fill="#404040" stroke="#404040" stroke-width="0.12" text-anchor="middle">vFeatures</text>
<text x="639.4" y="305.3" font-size="5.8" font-weight="bold" fill="#111" text-anchor="start">Id</text>
<text x="639.4" y="312.9" font-size="5.8" font-weight="normal" fill="#484848" stroke="#484848" stroke-width="0.12" text-anchor="start">Title</text>
<text x="639.4" y="320.5" font-size="5.8" font-weight="normal" fill="#484848" stroke="#484848" stroke-width="0.12" text-anchor="start">Category</text>
<text x="639.4" y="328.1" font-size="5.8" font-weight="normal" fill="#484848" stroke="#484848" stroke-width="0.12" text-anchor="start">V2007</text>
<text x="639.4" y="335.7" font-size="5.8" font-weight="normal" fill="#484848" stroke="#484848" stroke-width="0.12" text-anchor="start">V2010</text>
<text x="639.4" y="343.3" font-size="5.8" font-weight="normal" fill="#484848" stroke="#484848" stroke-width="0.12" text-anchor="start">V2013</text>
<text x="639.4" y="350.9" font-size="5.8" font-weight="bold" fill="#111" text-anchor="start">Requires</text>
<text x="639.4" y="358.5" font-size="5.8" font-weight="normal" fill="#484848" stroke="#484848" stroke-width="0.12" text-anchor="start">MoreInfoUrl</text>
<text x="639.4" y="366.1" font-size="5.8" font-weight="normal" fill="#484848" stroke="#484848" stroke-width="0.12" text-anchor="start">ImageUrl</text>
<text x="639.4" y="373.7" font-size="5.8" font-weight="bold" fill="#111" text-anchor="start">Version</text>
<text x="639.4" y="381.3" font-size="5.8" font-weight="bold" fill="#111" text-anchor="start">CreatedAt</text>
<text x="639.4" y="388.9" font-size="5.8" font-weight="normal" fill="#484848" stroke="#484848" stroke-width="0.12" text-anchor="start">UpdatedAt</text>
<text x="639.4" y="396.5" font-size="5.8" font-weight="bold" fill="#111" text-anchor="start">Deleted</text>
<g stroke="#000" stroke-width="1.3" fill="none">
<rect x="636.4" y="284.3" width="39.10000000000002" height="117.09999999999997"/>
<line x1="636.4" y1="296.5" x2="675.5" y2="296.5"/>
</g>
<rect x="744.2" y="230.3" width="39.09999999999991" height="116.89999999999998" fill="#e6e6e6"/>
<rect x="744.2" y="230.3" width="39.09999999999991" height="12.0" fill="#c8c8c8"/>
<text x="763.8" y="238.4" font-size="5.8" font-weight="normal" fill="#404040" stroke="#404040" stroke-width="0.12" text-anchor="middle">vAddons</text>
<text x="747.2" y="250.8" font-size="5.8" font-weight="bold" fill="#111" text-anchor="start">Id</text>
<text x="747.2" y="258.4" font-size="5.8" font-weight="normal" fill="#484848" stroke="#484848" stroke-width="0.12" text-anchor="start">Name</text>
<text x="747.2" y="266.0" font-size="5.8" font-weight="normal" fill="#484848" stroke="#484848" stroke-width="0.12" text-anchor="start">Title</text>
<text x="747.2" y="273.6" font-size="5.8" font-weight="normal" fill="#484848" stroke="#484848" stroke-width="0.12" text-anchor="start">Description</text>
<text x="747.2" y="281.2" font-size="5.8" font-weight="normal" fill="#484848" stroke="#484848" stroke-width="0.12" text-anchor="start">Std</text>
<text x="747.2" y="288.8" font-size="5.8" font-weight="normal" fill="#484848" stroke="#484848" stroke-width="0.12" text-anchor="start">Pro</text>
<text x="747.2" y="296.4" font-size="5.8" font-weight="normal" fill="#484848" stroke="#484848" stroke-width="0.12" text-anchor="start">Sdk</text>
<text x="747.2" y="304.0" font-size="5.8" font-weight="normal" fill="#484848" stroke="#484848" stroke-width="0.12" text-anchor="start">MoreInfoUrl</text>
<text x="747.2" y="311.6" font-size="5.8" font-weight="normal" fill="#484848" stroke="#484848" stroke-width="0.12" text-anchor="start">ImageUrl</text>
<text x="747.2" y="319.2" font-size="5.8" font-weight="bold" fill="#111" text-anchor="start">Version</text>
<text x="747.2" y="326.8" font-size="5.8" font-weight="bold" fill="#111" text-anchor="start">CreatedAt</text>
<text x="747.2" y="334.4" font-size="5.8" font-weight="normal" fill="#484848" stroke="#484848" stroke-width="0.12" text-anchor="start">UpdatedAt</text>
<text x="747.2" y="342.0" font-size="5.8" font-weight="bold" fill="#111" text-anchor="start">Deleted</text>
<g stroke="#000" stroke-width="1.3" fill="none">
<rect x="744.2" y="230.3" width="39.09999999999991" height="116.89999999999998"/>
<line x1="744.2" y1="242.3" x2="783.3" y2="242.3"/>
</g>
<rect x="636.4" y="484.5" width="48.10000000000002" height="115.5" fill="#e6e6e6"/>
<rect x="636.4" y="484.5" width="48.10000000000002" height="12.899999999999977" fill="#c8c8c8"/>
<text x="660.5" y="493.1" font-size="5.8" font-weight="normal" fill="#404040" stroke="#404040" stroke-width="0.12" text-anchor="middle">vStencilMasters</text>
<text x="639.4" y="505.0" font-size="5.8" font-weight="bold" fill="#111" text-anchor="start">Id</text>
<text x="639.4" y="512.6" font-size="5.8" font-weight="normal" fill="#484848" stroke="#484848" stroke-width="0.12" text-anchor="start">StencilId</text>
<text x="639.4" y="520.2" font-size="5.8" font-weight="bold" fill="#111" text-anchor="start">Index</text>
<text x="639.4" y="527.8" font-size="5.8" font-weight="normal" fill="#484848" stroke="#484848" stroke-width="0.12" text-anchor="start">Name</text>
<text x="639.4" y="535.4" font-size="5.8" font-weight="normal" fill="#484848" stroke="#484848" stroke-width="0.12" text-anchor="start">NameU</text>
<text x="639.4" y="543.0" font-size="5.8" font-weight="normal" fill="#484848" stroke="#484848" stroke-width="0.12" text-anchor="start">Description</text>
<text x="639.4" y="550.6" font-size="5.8" font-weight="normal" fill="#484848" stroke="#484848" stroke-width="0.12" text-anchor="start">GUID</text>
<text x="639.4" y="558.2" font-size="5.8" font-weight="normal" fill="#484848" stroke="#484848" stroke-width="0.12" text-anchor="start">Keywords</text>
<g stroke="#000" stroke-width="1.3" fill="none">
<rect x="636.4" y="484.5" width="48.10000000000002" height="115.5"/>
<line x1="636.4" y1="497.4" x2="684.5" y2="497.4"/>
</g>
<rect x="744.7" y="454.3" width="52.39999999999998" height="145.7" fill="#e6e6e6"/>
<rect x="744.7" y="454.3" width="52.39999999999998" height="12.899999999999977" fill="#c8c8c8"/>
<text x="770.9" y="462.9" font-size="5.8" font-weight="normal" fill="#404040" stroke="#404040" stroke-width="0.12" text-anchor="middle">vTemplates</text>
<text x="747.7" y="475.4" font-size="5.8" font-weight="bold" fill="#111" text-anchor="start">Id</text>
<text x="747.7" y="483.0" font-size="5.8" font-weight="normal" fill="#484848" stroke="#484848" stroke-width="0.12" text-anchor="start">Name</text>
<text x="747.7" y="490.6" font-size="5.8" font-weight="normal" fill="#484848" stroke="#484848" stroke-width="0.12" text-anchor="start">MenuPath</text>
<text x="747.7" y="498.2" font-size="5.8" font-weight="normal" fill="#484848" stroke="#484848" stroke-width="0.12" text-anchor="start">Category</text>
<text x="747.7" y="505.8" font-size="5.8" font-weight="normal" fill="#484848" stroke="#484848" stroke-width="0.12" text-anchor="start">SubCategory</text>
<text x="747.7" y="513.4" font-size="5.8" font-weight="normal" fill="#484848" stroke="#484848" stroke-width="0.12" text-anchor="start">Item</text>
<text x="747.7" y="521.0" font-size="5.8" font-weight="normal" fill="#484848" stroke="#484848" stroke-width="0.12" text-anchor="start">Title</text>
<text x="747.7" y="528.6" font-size="5.8" font-weight="normal" fill="#484848" stroke="#484848" stroke-width="0.12" text-anchor="start">Description</text>
<text x="747.7" y="536.2" font-size="5.8" font-weight="normal" fill="#484848" stroke="#484848" stroke-width="0.12" text-anchor="start">AlternativeNames</text>
<text x="747.7" y="543.8" font-size="5.8" font-weight="normal" fill="#484848" stroke="#484848" stroke-width="0.12" text-anchor="start">Units</text>
<text x="747.7" y="551.4" font-size="5.8" font-weight="normal" fill="#484848" stroke="#484848" stroke-width="0.12" text-anchor="start">Std</text>
<text x="747.7" y="559.0" font-size="5.8" font-weight="normal" fill="#484848" stroke="#484848" stroke-width="0.12" text-anchor="start">Pro</text>
<g stroke="#000" stroke-width="1.3" fill="none">
<rect x="744.7" y="454.3" width="52.39999999999998" height="145.7"/>
<line x1="744.7" y1="467.2" x2="797.1" y2="467.2"/>
</g>
<rect x="852.3" y="538.2" width="49.40000000000009" height="61.799999999999955" fill="#e6e6e6"/>
<rect x="852.3" y="538.2" width="49.40000000000009" height="12.799999999999955" fill="#c8c8c8"/>
<text x="877.0" y="546.7" font-size="5.8" font-weight="normal" fill="#404040" stroke="#404040" stroke-width="0.12" text-anchor="middle">FeatureRequires</text>
<g stroke="#000" stroke-width="1.3" fill="none">
<rect x="852.3" y="538.2" width="49.40000000000009" height="61.799999999999955"/>
<line x1="852.3" y1="551" x2="901.7" y2="551"/>
</g>
<rect x="528.4" y="538.3" width="39.200000000000045" height="61.700000000000045" fill="#e6e6e6"/>
<rect x="528.4" y="538.3" width="39.200000000000045" height="12.700000000000045" fill="#c8c8c8"/>
<text x="548.0" y="546.8" font-size="5.8" font-weight="normal" fill="#404040" stroke="#404040" stroke-width="0.12" text-anchor="middle">vFunctions</text>
<g stroke="#000" stroke-width="1.3" fill="none">
<rect x="528.4" y="538.3" width="39.200000000000045" height="61.700000000000045"/>
<line x1="528.4" y1="551" x2="567.6" y2="551"/>
</g>
<rect x="204.5" y="523.4" width="53.10000000000002" height="76.60000000000002" fill="#e6e6e6"/>
<rect x="204.5" y="523.4" width="53.10000000000002" height="12.899999999999977" fill="#c8c8c8"/>
<text x="231.1" y="531.9" font-size="5.8" font-weight="normal" fill="#404040" stroke="#404040" stroke-width="0.12" text-anchor="middle">vStencils</text>
<text x="207.5" y="544.0" font-size="5.8" font-weight="bold" fill="#111" text-anchor="start">Id</text>
<text x="207.5" y="551.6" font-size="5.8" font-weight="normal" fill="#484848" stroke="#484848" stroke-width="0.12" text-anchor="start">Name</text>
<g stroke="#000" stroke-width="1.3" fill="none">
<rect x="204.5" y="523.4" width="53.10000000000002" height="76.60000000000002"/>
<line x1="204.5" y1="536.3" x2="257.6" y2="536.3"/>
</g>
<rect x="432.7" y="362.6" width="52.5" height="85.5" fill="#fff"/>
<rect x="432.7" y="362.6" width="52.5" height="13.699999999999989" fill="#c8c8c8"/>
<text x="458.9" y="372.3" font-size="5.8" font-weight="normal" fill="#404040" stroke="#404040" stroke-width="0.12" text-anchor="middle">Functions</text>
<text x="435.2" y="384.5" font-size="5.8" font-weight="normal" fill="#111" stroke="#111" stroke-width="0.3">PK</text>
<text x="448.5" y="384.5" font-size="5.8" font-weight="bold" fill="#202020" text-decoration="underline">Id</text>
<text x="448.5" y="399.2" font-size="5.8" font-weight="normal" fill="#484848" stroke="#484848" stroke-width="0.12" text-anchor="start">Title</text>
<text x="448.5" y="406.8" font-size="5.8" font-weight="normal" fill="#484848" stroke="#484848" stroke-width="0.12" text-anchor="start">MoreInfoUrl</text>
<text x="448.5" y="414.4" font-size="5.8" font-weight="normal" fill="#484848" stroke="#484848" stroke-width="0.12" text-anchor="start">ImageUrl</text>
<text x="448.5" y="422.0" font-size="5.8" font-weight="bold" fill="#111" text-anchor="start">Version</text>
<text x="448.5" y="429.6" font-size="5.8" font-weight="bold" fill="#111" text-anchor="start">CreatedAt</text>
<text x="435.2" y="429.6" font-size="5.8" font-weight="normal" fill="#303030" stroke="#303030" stroke-width="0.12" text-anchor="start">I1</text>
<text x="448.5" y="437.2" font-size="5.8" font-weight="normal" fill="#484848" stroke="#484848" stroke-width="0.12" text-anchor="start">UpdatedAt</text>
<text x="448.5" y="444.8" font-size="5.8" font-weight="bold" fill="#111" text-anchor="start">Deleted</text>
<g stroke="#000" stroke-width="1.3"><line x1="432.7" y1="376.3" x2="485.2" y2="376.3"/><line x1="432.7" y1="388.4" x2="485.2" y2="388.4"/><line x1="446.3" y1="376.3" x2="446.3" y2="448.1"/></g>
<rect x="432.7" y="362.6" width="52.5" height="85.5" fill="none" stroke="#8c8c8c" stroke-width="1.4"/>
<line x1="240.8" y1="347.4" x2="240.8" y2="383.5" stroke="#000" stroke-width="1.15" stroke-dasharray="3.3 2.7"/>
<line x1="237.8" y1="350.4" x2="243.8" y2="350.4" stroke="#000" stroke-width="1"/>
<line x1="240.8" y1="347.4" x2="240.8" y2="353.8" stroke="#000" stroke-width="1.2"/>
<circle cx="240.8" cy="353.8" r="2.6" fill="#fff" stroke="#000" stroke-width="1.05"/>
<circle cx="240.8" cy="375.3" r="2.6" fill="#fff" stroke="#000" stroke-width="1.05"/>
<path d="M237.3,383.5 L240.8,378.3 L244.3,383.5 M240.8,378.3 L240.8,383.5" stroke="#000" stroke-width="1.1" fill="none"/>
<line x1="348.6" y1="401.3" x2="348.6" y2="437.1" stroke="#000" stroke-width="1.15" stroke-dasharray="3.3 2.7"/>
<line x1="345.6" y1="404.3" x2="351.6" y2="404.3" stroke="#000" stroke-width="1"/>
<line x1="348.6" y1="401.3" x2="348.6" y2="408.0" stroke="#000" stroke-width="1.2"/>
<circle cx="348.6" cy="408.0" r="2.6" fill="#fff" stroke="#000" stroke-width="1.05"/>
<circle cx="348.6" cy="429.2" r="2.6" fill="#fff" stroke="#000" stroke-width="1.05"/>
<path d="M345.1,437.1 L348.6,432.2 L352.1,437.1 M348.6,432.2 L348.6,437.1" stroke="#000" stroke-width="1.1" fill="none"/>
<line x1="271.8" y1="391.5" x2="315.5" y2="391.5" stroke="#000" stroke-width="1.15" stroke-dasharray="3.3 2.7"/>
<path d="M271.8,388.0 L274.7,391.5 L271.8,395.0 M271.8,391.5 L274.7,391.5" stroke="#000" stroke-width="1.1" fill="none"/>
<circle cx="277.7" cy="391.5" r="2.6" fill="#fff" stroke="#000" stroke-width="1.05"/>
<circle cx="307.6" cy="391.5" r="2.6" fill="#fff" stroke="#000" stroke-width="1.05"/>
<line x1="311.5" y1="388.5" x2="311.5" y2="394.5" stroke="#000" stroke-width="1"/>
<path d="M488.1,485.4 L488.1,354.4 L540.6,354.4" stroke="#000" stroke-width="1.15" fill="none" stroke-dasharray="3.3 2.7"/>
<circle cx="532.3" cy="354.4" r="2.6" fill="#fff" stroke="#000" stroke-width="1.05"/>
<line x1="537.5" y1="351" x2="537.5" y2="358" stroke="#000" stroke-width="1"/>
<circle cx="488.1" cy="477.8" r="2.6" fill="#fff" stroke="#000" stroke-width="1.05"/>
<path d="M484.6,485.4 L488.1,481 L491.6,485.4" stroke="#000" stroke-width="1.1" fill="none"/>
<line x1="458" y1="448" x2="458" y2="485.4" stroke="#000" stroke-width="1.15" stroke-dasharray="3.3 2.7"/>
<circle cx="458" cy="477.8" r="2.6" fill="#fff" stroke="#000" stroke-width="1.05"/>
<path d="M454.5,485.4 L458,481 L461.5,485.4" stroke="#000" stroke-width="1.1" fill="none"/>
<path d="M455,455 Q458,460 461,455" stroke="#000" stroke-width="1" fill="none"/>
<line x1="458.5" y1="334" x2="458.5" y2="356" stroke="#8c8c8c" stroke-width="1.4"/>
<circle cx="432.7" cy="362.6" r="6.0" fill="#fff" stroke="#9c9c9c" stroke-width="2.5"/>
<line x1="427.09999999999997" y1="357.0" x2="438.3" y2="368.20000000000005" stroke="#9c9c9c" stroke-width="2.5"/>
<circle cx="432.7" cy="448.1" r="6.0" fill="#fff" stroke="#9c9c9c" stroke-width="2.5"/>
<line x1="427.09999999999997" y1="442.5" x2="438.3" y2="453.70000000000005" stroke="#9c9c9c" stroke-width="2.5"/>
<circle cx="458.3" cy="362.6" r="6.0" fill="#fff" stroke="#9c9c9c" stroke-width="2.5"/>
<line x1="452.7" y1="357.0" x2="463.90000000000003" y2="368.20000000000005" stroke="#9c9c9c" stroke-width="2.5"/>
<circle cx="458.3" cy="448.1" r="6.0" fill="#fff" stroke="#9c9c9c" stroke-width="2.5"/>
<line x1="452.7" y1="442.5" x2="463.90000000000003" y2="453.70000000000005" stroke="#9c9c9c" stroke-width="2.5"/>
<circle cx="485.2" cy="362.6" r="6.0" fill="#fff" stroke="#9c9c9c" stroke-width="2.5"/>
<line x1="479.59999999999997" y1="357.0" x2="490.8" y2="368.20000000000005" stroke="#9c9c9c" stroke-width="2.5"/>
<circle cx="485.2" cy="448.1" r="6.0" fill="#fff" stroke="#9c9c9c" stroke-width="2.5"/>
<line x1="479.59999999999997" y1="442.5" x2="490.8" y2="453.70000000000005" stroke="#9c9c9c" stroke-width="2.5"/>
<circle cx="432.7" cy="405.6" r="6.0" fill="#fff" stroke="#9c9c9c" stroke-width="2.5"/>
<line x1="427.09999999999997" y1="400.0" x2="438.3" y2="411.20000000000005" stroke="#9c9c9c" stroke-width="2.5"/>
<circle cx="485.2" cy="405.6" r="6.0" fill="#fff" stroke="#9c9c9c" stroke-width="2.5"/>
<line x1="479.59999999999997" y1="400.0" x2="490.8" y2="411.20000000000005" stroke="#9c9c9c" stroke-width="2.5"/>
<path d="M465.4,317.3 A8.6,8.6 0 1 0 463.3,329.2" fill="none" stroke="#9c9c9c" stroke-width="8.2"/>
<path d="M465.4,317.3 A8.6,8.6 0 1 0 463.3,329.2" fill="none" stroke="#fff" stroke-width="2.7"/>
<path d="M458,320.6 L476.5,320.6 L467.3,329.3 Z" fill="#fff" stroke="#9c9c9c" stroke-width="2.4" stroke-linejoin="miter"/>
<path d="M460,321.9 L469,321.9" stroke="#fff" stroke-width="2.6"/>
</g>
<line x1="193.5" y1="181" x2="193.5" y2="550" stroke="#a0aabb" stroke-width="1"/>
<line x1="926.5" y1="181" x2="926.5" y2="550" stroke="#96a0b0" stroke-width="1.1"/>
</svg>
<div class="a" style="left:0;top:160px;width:180px;height:668px;background:#e9e9e9"></div>
<div class="a" style="left:11px;top:189.5px;font-size:25px;color:#3955a3;line-height:30px">Shapes</div>
<svg class="a" style="left:129px;top:195px" width="15" height="15" viewBox="0 0 15 15"><rect x="0.5" y="0.5" width="14" height="13" fill="#fff" stroke="#555" stroke-width="1"/><rect x="0.5" y="0.5" width="14" height="3" fill="#555"/></svg>
<svg class="a" style="left:151px;top:196px" width="10" height="12" viewBox="0 0 10 12"><path d="M7,1.5 L3,6 L7,10.5" fill="none" stroke="#444" stroke-width="1.6"/></svg>
<div class="a" style="left:11px;top:245px;width:145px;height:24px;background:#fff;border:1px solid #ababab"></div>
<div class="a" style="left:13px;top:249px;font-size:14.4px;color:#333;line-height:16px">Search shapes</div>
<svg class="a" style="left:117px;top:253px" width="9" height="5" viewBox="0 0 9 5"><path d="M0.5,0.5 H8 L4.25,4.5 Z" fill="#444"/></svg>
<svg class="a" style="left:134px;top:247px" width="20" height="20" viewBox="0 0 20 20"><circle cx="12" cy="8" r="5.8" fill="none" stroke="#2d5aa0" stroke-width="2"/><line x1="7.8" y1="12.2" x2="2" y2="18" stroke="#2d5aa0" stroke-width="2.4"/></svg>
<div class="a" style="left:9px;top:308px;font-size:14.5px;color:#444;line-height:17px">More Shapes</div>
<svg class="a" style="left:115px;top:310px" width="8" height="12" viewBox="0 0 8 12"><path d="M1,0.5 L7,6 L1,11.5 Z" fill="#666"/></svg>
<div class="a" style="left:9px;top:337px;font-size:14.5px;color:#444;line-height:17px">Quick Shapes</div>
<div class="a" style="left:7px;top:359px;width:160px;height:30px;background:#c5d0f0"></div>
<div class="a" style="left:9px;top:366px;font-size:14.5px;font-weight:bold;color:#333;line-height:17px">Entity Relationship</div>
<div class="a" style="left:7px;top:396px;width:160px;height:1px;background:#d8d8d8"></div>
<svg class="a" style="left:15px;top:414px" width="24" height="24" viewBox="0 0 24 24"><rect x="3" y="3" width="20" height="20" fill="#8a8a8a"/><rect x="1.2" y="1.2" width="19.6" height="19.6" fill="#fff" stroke="#111" stroke-width="1.4"/><rect x="1.9" y="1.9" width="18.2" height="3.3" fill="#bdbdbd"/><line x1="1.2" y1="10" x2="20.8" y2="10" stroke="#111" stroke-width="1.3"/><line x1="6.2" y1="5.2" x2="6.2" y2="20.8" stroke="#111" stroke-width="1.3"/></svg>
<div class="a" style="left:44px;top:418px;font-size:14.5px;color:#444;line-height:17px">Entity</div>
<svg class="a" style="left:13px;top:459px" width="26" height="26" viewBox="0 0 26 26"><rect x="1.5" y="1.5" width="6.5" height="7" fill="#fff" stroke="#888" stroke-width="1.1"/><rect x="1.5" y="1.5" width="6.5" height="2" fill="#999"/><line x1="3.8" y1="3.5" x2="3.8" y2="8.5" stroke="#888" stroke-width="0.9"/><rect x="18.5" y="17.5" width="6.5" height="7" fill="#fff" stroke="#888" stroke-width="1.1"/><rect x="18.5" y="17.5" width="6.5" height="2" fill="#999"/><line x1="20.8" y1="19.5" x2="20.8" y2="24.5" stroke="#888" stroke-width="0.9"/><path d="M9,5 H14.6 V21.8 H18.5" fill="none" stroke="#000" stroke-width="1.2"/><path d="M8,5 L12,2.5 L12,7.5 Z" fill="#000"/><rect x="7.2" y="4.2" width="1.6" height="1.6" fill="#e00"/><rect x="17.5" y="21" width="1.6" height="1.6" fill="#e00"/></svg>
<div class="a" style="left:44px;top:465px;font-size:14.5px;color:#444;line-height:17px">Relationship</div>
<div class="a" style="left:6px;top:511px;width:162px;height:1px;background:#dedede"></div>
<div class="a" style="left:11px;top:532.5px;font-size:25px;letter-spacing:0.22px;color:#3955a3;line-height:30px">Tables ...</div>
<svg class="a" style="left:129px;top:538px" width="15" height="15" viewBox="0 0 15 15"><rect x="0.5" y="0.5" width="14" height="13" fill="#fff" stroke="#555" stroke-width="1"/><rect x="0.5" y="0.5" width="14" height="3" fill="#555"/></svg>
<svg class="a" style="left:151px;top:539px" width="12" height="12" viewBox="0 0 12 12"><path d="M1,1 L11,11 M11,1 L1,11" stroke="#444" stroke-width="1.6"/></svg>
<div class="a" style="left:7px;top:570px;width:140px;height:247px;background:#fff"></div>
<div class="a" style="left:147px;top:570px;width:19px;height:247px;background:#f0f0f0"></div>
<div class="a" style="left:147px;top:591px;width:19px;height:103px;background:#c8c8c8"></div>
<svg class="a" style="left:151px;top:576px" width="12" height="8" viewBox="0 0 12 8"><path d="M1,7 L6,2 L11,7" fill="none" stroke="#444" stroke-width="1.5"/></svg>
<svg class="a" style="left:151px;top:803px" width="12" height="8" viewBox="0 0 12 8"><path d="M1,1 L6,6 L11,1" fill="none" stroke="#444" stroke-width="1.5"/></svg>
<svg class="lico" style="top:573px" width="15" height="15" viewBox="0 0 15 15"><rect x="2.5" y="2.5" width="12" height="12" fill="#8a8a8a"/><rect x="0.7" y="0.7" width="11.6" height="11.6" fill="#fff" stroke="#111" stroke-width="1.3"/><rect x="1.4" y="1.4" width="10.2" height="1.8" fill="#7a7a7a"/><path d="M2.3,5 H4 M5,5 H6.5 M7.5,5 H10 M2.3,7.2 H4 M5,7.2 H10 M2.3,9.4 H4 M5,9.4 H6.5 M7.5,9.4 H10" stroke="#222" stroke-width="0.9"/></svg>
<div class="li" style="top:574.5px">AddonFeatures</div>
<svg class="lico" style="top:594px" width="15" height="15" viewBox="0 0 15 15"><rect x="2.5" y="2.5" width="12" height="12" fill="#8a8a8a"/><rect x="0.7" y="0.7" width="11.6" height="11.6" fill="#fff" stroke="#111" stroke-width="1.3"/><rect x="1.4" y="1.4" width="10.2" height="1.8" fill="#7a7a7a"/><path d="M2.3,5 H4 M5,5 H6.5 M7.5,5 H10 M2.3,7.2 H4 M5,7.2 H10 M2.3,9.4 H4 M5,9.4 H6.5 M7.5,9.4 H10" stroke="#222" stroke-width="0.9"/></svg>
<div class="li" style="top:595.5px">Addons</div>
<svg class="lico" style="top:615px" width="15" height="15" viewBox="0 0 15 15"><rect x="2.5" y="2.5" width="12" height="12" fill="#8a8a8a"/><rect x="0.7" y="0.7" width="11.6" height="11.6" fill="#fff" stroke="#111" stroke-width="1.3"/><rect x="1.4" y="1.4" width="10.2" height="1.8" fill="#7a7a7a"/><path d="M2.3,5 H4 M5,5 H6.5 M7.5,5 H10 M2.3,7.2 H4 M5,7.2 H10 M2.3,9.4 H4 M5,9.4 H6.5 M7.5,9.4 H10" stroke="#222" stroke-width="0.9"/></svg>
<div class="li" style="top:616.6px">EditionFunctions</div>
<svg class="lico" style="top:636px" width="15" height="15" viewBox="0 0 15 15"><rect x="2.5" y="2.5" width="12" height="12" fill="#8a8a8a"/><rect x="0.7" y="0.7" width="11.6" height="11.6" fill="#fff" stroke="#111" stroke-width="1.3"/><rect x="1.4" y="1.4" width="10.2" height="1.8" fill="#7a7a7a"/><path d="M2.3,5 H4 M5,5 H6.5 M7.5,5 H10 M2.3,7.2 H4 M5,7.2 H10 M2.3,9.4 H4 M5,9.4 H6.5 M7.5,9.4 H10" stroke="#222" stroke-width="0.9"/></svg>
<div class="li" style="top:637.6px">Editions</div>
<svg class="lico" style="top:657px" width="15" height="15" viewBox="0 0 15 15"><rect x="2.5" y="2.5" width="12" height="12" fill="#8a8a8a"/><rect x="0.7" y="0.7" width="11.6" height="11.6" fill="#fff" stroke="#111" stroke-width="1.3"/><rect x="1.4" y="1.4" width="10.2" height="1.8" fill="#7a7a7a"/><path d="M2.3,5 H4 M5,5 H6.5 M7.5,5 H10 M2.3,7.2 H4 M5,7.2 H10 M2.3,9.4 H4 M5,9.4 H6.5 M7.5,9.4 H10" stroke="#222" stroke-width="0.9"/></svg>
<div class="li" style="top:658.7px">FeatureRequires</div>
<svg class="lico" style="top:678px" width="15" height="15" viewBox="0 0 15 15"><rect x="2.5" y="2.5" width="12" height="12" fill="#8a8a8a"/><rect x="0.7" y="0.7" width="11.6" height="11.6" fill="#fff" stroke="#111" stroke-width="1.3"/><rect x="1.4" y="1.4" width="10.2" height="1.8" fill="#7a7a7a"/><path d="M2.3,5 H4 M5,5 H6.5 M7.5,5 H10 M2.3,7.2 H4 M5,7.2 H10 M2.3,9.4 H4 M5,9.4 H6.5 M7.5,9.4 H10" stroke="#222" stroke-width="0.9"/></svg>
<div class="li" style="top:679.8px">Features</div>
<svg class="lico" style="top:699px" width="15" height="15" viewBox="0 0 15 15"><rect x="2.5" y="2.5" width="12" height="12" fill="#8a8a8a"/><rect x="0.7" y="0.7" width="11.6" height="11.6" fill="#fff" stroke="#111" stroke-width="1.3"/><rect x="1.4" y="1.4" width="10.2" height="1.8" fill="#7a7a7a"/><path d="M2.3,5 H4 M5,5 H6.5 M7.5,5 H10 M2.3,7.2 H4 M5,7.2 H10 M2.3,9.4 H4 M5,9.4 H6.5 M7.5,9.4 H10" stroke="#222" stroke-width="0.9"/></svg>
<div class="li" style="top:700.8px">Functions</div>
<svg class="lico" style="top:720px" width="15" height="15" viewBox="0 0 15 15"><rect x="2.5" y="2.5" width="12" height="12" fill="#8a8a8a"/><rect x="0.7" y="0.7" width="11.6" height="11.6" fill="#fff" stroke="#111" stroke-width="1.3"/><rect x="1.4" y="1.4" width="10.2" height="1.8" fill="#7a7a7a"/><path d="M2.3,5 H4 M5,5 H6.5 M7.5,5 H10 M2.3,7.2 H4 M5,7.2 H10 M2.3,9.4 H4 M5,9.4 H6.5 M7.5,9.4 H10" stroke="#222" stroke-width="0.9"/></svg>
<div class="li" style="top:721.9px">StencilMasters</div>
<svg class="lico" style="top:741px" width="15" height="15" viewBox="0 0 15 15"><rect x="2.5" y="2.5" width="12" height="12" fill="#8a8a8a"/><rect x="0.7" y="0.7" width="11.6" height="11.6" fill="#fff" stroke="#111" stroke-width="1.3"/><rect x="1.4" y="1.4" width="10.2" height="1.8" fill="#7a7a7a"/><path d="M2.3,5 H4 M5,5 H6.5 M7.5,5 H10 M2.3,7.2 H4 M5,7.2 H10 M2.3,9.4 H4 M5,9.4 H6.5 M7.5,9.4 H10" stroke="#222" stroke-width="0.9"/></svg>
<div class="li" style="top:742.9px">Stencils</div>
<svg class="lico" style="top:762px" width="15" height="15" viewBox="0 0 15 15"><rect x="2.5" y="2.5" width="12" height="12" fill="#8a8a8a"/><rect x="0.7" y="0.7" width="11.6" height="11.6" fill="#fff" stroke="#111" stroke-width="1.3"/><rect x="1.4" y="1.4" width="10.2" height="1.8" fill="#7a7a7a"/><path d="M2.3,5 H4 M5,5 H6.5 M7.5,5 H10 M2.3,7.2 H4 M5,7.2 H10 M2.3,9.4 H4 M5,9.4 H6.5 M7.5,9.4 H10" stroke="#222" stroke-width="0.9"/></svg>
<div class="li" style="top:764.0px">Templates</div>
<svg class="lico" style="top:784px" width="15" height="15" viewBox="0 0 15 15"><rect x="2.5" y="2.5" width="12" height="12" fill="#8a8a8a"/><rect x="0.7" y="0.7" width="11.6" height="11.6" fill="#fff" stroke="#111" stroke-width="1.3"/><rect x="1.4" y="1.4" width="10.2" height="1.8" fill="#7a7a7a"/><path d="M2.3,5 H4 M5,5 H6.5 M7.5,5 H10 M2.3,7.2 H4 M5,7.2 H10 M2.3,9.4 H4 M5,9.4 H6.5 M7.5,9.4 H10" stroke="#222" stroke-width="0.9"/></svg>
<div class="li" style="top:785.0px">TemplateStencils</div>
<svg class="lico" style="top:805px" width="15" height="15" viewBox="0 0 15 15"><rect x="2.5" y="2.5" width="12" height="12" fill="#8a8a8a"/><rect x="0.7" y="0.7" width="11.6" height="11.6" fill="#fff" stroke="#111" stroke-width="1.3"/><path d="M3.5,3.5 L6.5,9.5 L9.5,3.5" fill="none" stroke="#111" stroke-width="1.2"/></svg>
<div class="li" style="top:806.0px">vAddonFeatures</div>
<div class="a" style="left:7px;top:817px;width:159px;height:11px;background:#f0f0f0"></div>
<div class="a" style="left:27px;top:819px;width:78px;height:9px;background:#c8c8c8"></div>
<svg class="a" style="left:13px;top:822px" width="8" height="6" viewBox="0 0 8 6"><path d="M6,0 L2,4 L6,8" fill="none" stroke="#555" stroke-width="1.4"/></svg>
<svg class="a" style="left:131px;top:822px" width="8" height="6" viewBox="0 0 8 6"><path d="M2,0 L6,4 L2,8" fill="none" stroke="#555" stroke-width="1.4"/></svg>
<div class="a" style="left:180px;top:550px;width:825px;height:20px;background:#dcdcdc"></div>
<div class="a" style="left:182px;top:551px;width:19px;height:19px;background:#fff;border:1px solid #d0d0d0"></div>
<svg class="a" style="left:187px;top:555px" width="8" height="11" viewBox="0 0 8 11"><path d="M7,0.5 V10.5 L1,5.5 Z" fill="#666"/></svg>
<div class="a" style="left:521px;top:551px;width:484px;height:19px;background:#fff;border:1px solid #c8c8c8;border-right:none"></div>
<div class="a" style="left:180px;top:570px;width:825px;height:68px;background:#e9e9e9"></div>
<div class="a" style="left:198px;top:586px;font-size:14.6px;font-weight:bold;color:#3955a3;line-height:17px">Page-1</div>
<div class="a" style="left:265px;top:585px;width:1px;height:18px;background:#d6d6d6"></div>
<div class="a" style="left:283px;top:586px;font-size:14.6px;color:#555;line-height:17px">All</div>
<svg class="a" style="left:306px;top:591px" width="12" height="8" viewBox="0 0 12 8"><path d="M1,7.5 H11 L6,1 Z" fill="#444"/></svg>
<div class="a" style="left:336px;top:585px;width:1px;height:18px;background:#d6d6d6"></div>
<svg class="a" style="left:348px;top:583px" width="22" height="22" viewBox="0 0 22 22"><circle cx="11" cy="11" r="9.5" fill="none" stroke="#444" stroke-width="1.5"/><path d="M6,11 H16 M11,6 V16" stroke="#444" stroke-width="1.7"/></svg>
<div class="a" style="left:166px;top:620px;width:839px;height:208px;background:#e9e9e9"></div>
<div class="a" style="left:175px;top:662.5px;font-size:28px;color:#3955a3;line-height:30px;transform:rotate(90deg);transform-origin:center center;width:86px;height:30px;text-align:center">Output</div>
<div class="a" style="left:240px;top:638px;width:765px;height:25px;background:#e2e2e2;border:1px solid #a6a6a6;border-right:none"></div>
<div class="a" style="left:244px;top:643.5px;font-size:13.6px;color:#222;line-height:15px">Import</div>
<div class="a" style="left:240px;top:669px;width:765px;height:149px;background:#fff;border:1px solid #a8a8a8;border-right:none"></div>
<div class="mono" style="top:672px">Check Clauses Reverse Engineered : 0; Time Taken (in secs) : 0.48</div>
<div class="mono" style="top:688px">Primary Keys reverse engineered : 11; Time taken (in secs) : 0.45</div>
<div class="mono" style="top:704px">Foreign Keys reverse engineered : 6; Time taken (in secs) : 0.70</div>
<div class="mono" style="top:720px">Indexes reverse engineered : 17; Time taken (in secs) : 1.28</div>
<div class="mono" style="top:736px">Triggers reverse engineered : 0; Time taken (in secs): 0.36</div>
<div class="mono" style="top:752px">Views Reverse Engineered : 11; Time Taken (in secs) : 1.50</div>
<div class="mono" style="top:768px">Procedures reverse engineered : 0; Time taken (in secs): 0.00</div>
<div class="mono" style="top:784px">Total elapsed time(in secs): 7.36</div>
<div class="a" style="left:240px;top:818px;width:765px;height:10px;background:#f7f7f7"></div>
<div class="a" style="left:369px;top:818px;width:1px;height:10px;background:#c8c8c8"></div>
<div class="a" style="left:253px;top:822.5px;font-size:12.4px;color:#333;line-height:15px">Database Properties</div>
<div class="a" style="left:379px;top:822.5px;font-size:12.4px;color:#333;line-height:15px">Output</div>
<svg class="a" style="left:202px;top:822px" width="14" height="6" viewBox="0 0 14 6"><path d="M2,2 L12,12 M12,2 L2,12" stroke="#555" stroke-width="1.6"/></svg>
</body></html>
